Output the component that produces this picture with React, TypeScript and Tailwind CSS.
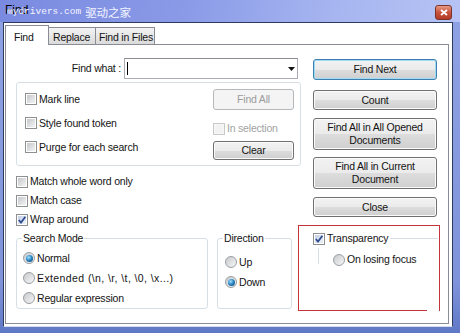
import React from "react";

function CheckBox({ checked = false, disabled = false }: { checked?: boolean; disabled?: boolean }) {
  return (
    <span
      className={
        disabled
          ? "relative flex h-[12px] w-[12px] shrink-0 items-center justify-center border border-[#c8c8c8] bg-[#f7f7f7]"
          : "relative flex h-[12px] w-[12px] shrink-0 items-center justify-center border border-[#8e8f8f] bg-white"
      }
    >
      <span
        className={
          disabled
            ? "h-[8px] w-[8px] bg-[#f2f2f2]"
            : checked
            ? "h-[8px] w-[8px] bg-[linear-gradient(135deg,#c3cde6,#eef2fa)]"
            : "h-[8px] w-[8px] bg-[linear-gradient(135deg,#c4c7cb,#f4f4f4)]"
        }
      />
      {checked && (
        <svg className="absolute left-0 top-0" width="10" height="10" viewBox="0 0 10 10">
          <path d="M1.8 5 L4 7.6 L8.4 1.8" fill="none" stroke="#2d4a8c" strokeWidth="1.7" />
        </svg>
      )}
    </span>
  );
}

function Radio({ checked = false }: { checked?: boolean }) {
  return (
    <span className="flex h-[12px] w-[12px] shrink-0 items-center justify-center rounded-full border border-[#9a9ea2] bg-[linear-gradient(135deg,#c6c9cd,#f7f7f7)]">
      {checked && (
        <span className="h-[7px] w-[7px] rounded-full bg-[radial-gradient(circle_at_38%_35%,#a6e2ff_0%,#2c89c6_45%,#0b3966_100%)]" />
      )}
    </span>
  );
}

function Btn({
  children,
  className = "",
  focused = false,
  disabled = false,
}: {
  children: React.ReactNode;
  className?: string;
  focused?: boolean;
  disabled?: boolean;
}) {
  const base = "flex items-center justify-center rounded-[3px] border text-center leading-[13px] ";
  const look = disabled
    ? "border-[#b5b9bc] bg-[#f4f4f4] text-[#9c9c9c]"
    : focused
    ? "border-[#3c7fb1] bg-[linear-gradient(to_bottom,#f2f2f2_0%,#ebebeb_50%,#dddddd_51%,#cfcfcf_100%)] shadow-[inset_0_0_0_1px_#9fdcf4]"
    : "border-[#707070] bg-[linear-gradient(to_bottom,#f2f2f2_0%,#ebebeb_50%,#dddddd_51%,#cfcfcf_100%)] shadow-[inset_0_0_0_1px_#fbfbfb]";
  return <div className={base + look + " " + className}>{children}</div>;
}

function CheckRow({ label, checked = false, className = "" }: { label: string; checked?: boolean; className?: string }) {
  return (
    <div className={"flex items-center gap-[2px] " + className}>
      <CheckBox checked={checked} />
      <span>{label}</span>
    </div>
  );
}

function RadioRow({
  label,
  checked = false,
  className = "",
  labelClass = "",
}: {
  label: string;
  checked?: boolean;
  className?: string;
  labelClass?: string;
}) {
  return (
    <div className={"flex items-center gap-[2px] " + className}>
      <Radio checked={checked} />
      <span className={labelClass}>{label}</span>
    </div>
  );
}

export default function App() {
  return (
    <div className="flex h-[333px] w-[460px] flex-col overflow-hidden bg-[linear-gradient(to_bottom,#8fa2e4,#7f93da_85%,#5f78c6)] font-['Liberation_Sans',Arial,sans-serif] text-[10.5px] leading-[13px] tracking-[-0.2px] text-[#141414]">
      {/* title bar */}
      <div className="relative flex h-[22px] shrink-0 items-start bg-[linear-gradient(100deg,#7a8ae0_0%,#8a9ae7_40%,#a6b5f0_72%,#b6c3f4_100%)]">
        <span className="pl-[5px] pt-[3px] text-[12px] leading-[14px] tracking-normal text-black">Find</span>
        <div className="absolute left-[7px] top-[6px] flex items-center gap-[4px] text-[#f4f6ff]">
          <span className="font-['Liberation_Mono',monospace] text-[9.5px] leading-[12px] tracking-normal">mydrivers.com</span>
          <span className="font-['Noto_Sans_CJK_SC',sans-serif] text-[11.5px] leading-[12px] tracking-normal">驱动之家</span>
        </div>
        <div className="ml-auto mr-[8px] mt-[5px] flex h-[15px] w-[17px] items-center justify-center rounded-[3px] border border-[#7a3326] bg-[linear-gradient(to_bottom,#e79a86,#c8533c_50%,#b43b26)]">
          <svg width="8" height="7" viewBox="0 0 8 7">
            <path d="M1 1 L7 6 M7 1 L1 6" stroke="white" strokeWidth="1.8" />
          </svg>
        </div>
      </div>

      {/* client area */}
      <div className="ml-[3px] mr-[7px] flex h-[305px] flex-col border-x border-t border-b border-x-[#2f3b5c] border-t-[#2f3b5c] border-b-[#d6dcec] bg-white pb-[2px] pl-[1px] pr-[3px]">
        {/* tabs */}
        <div className="mt-[2px] flex h-[19px] shrink-0 items-end">
          <div className="relative z-10 -mb-px flex h-[20px] w-[44px] items-start border border-b-0 border-[#898c95] bg-white pl-[8px] pt-[5px]">
            Find
          </div>
          <div className="flex h-[17px] w-[47px] items-start border-r border-t border-[#898c95] bg-[linear-gradient(to_bottom,#f3f3f3,#dadada)] pl-[4px] pt-[3px]">
            Replace
          </div>
          <div className="flex h-[17px] w-[59px] items-start border-r border-t border-[#898c95] bg-[linear-gradient(to_bottom,#f3f3f3,#dadada)] pl-[3px] pt-[3px]">
            Find in Files
          </div>
        </div>

        {/* panel */}
        <div className="flex flex-1 flex-col border border-[#898c95] bg-white">
          <div className="flex pl-[9px]">
            {/* left column */}
            <div className="flex w-[286px] flex-col">
              <div className="mt-[13px] flex h-[21px] items-center">
                <span className="w-[106px] text-right">Find what :</span>
                <div className="ml-[3px] flex h-[21px] w-[174px] items-center border border-[#abadb3] border-t-[#8a8d94] bg-white pl-[2px] pr-[2px]">
                  <span className="h-[13px] w-px bg-black" />
                  <svg className="ml-auto" width="7" height="4" viewBox="0 0 7 4">
                    <path d="M0 0 H7 L3.5 4 Z" fill="#111" />
                  </svg>
                </div>
              </div>

              <div className="ml-[1px] mt-[3px] flex h-[84px] w-[285px] rounded-[3px] border border-[#d5dfe5]">
                <div className="flex flex-col pl-[8px] pt-[4px]">
                  <CheckRow label="Mark line" className="h-[24px]" />
                  <CheckRow label="Style found token" className="h-[24px]" />
                  <CheckRow label="Purge for each search" className="h-[24px]" />
                </div>
                <div className="ml-auto mr-[6px] flex w-[81px] flex-col pt-[6px]">
                  <Btn disabled className="h-[21px]">
                    Find All
                  </Btn>
                  <div className="mt-[12px] flex h-[13px] items-center gap-[2px] text-[#a2a2a2]">
                    <CheckBox disabled />
                    <span>In selection</span>
                  </div>
                  <Btn className="mt-[6px] h-[19px]">Clear</Btn>
                </div>
              </div>

              <div className="ml-[1px] mt-[6px] flex flex-col">
                <CheckRow label="Match whole word only" className="h-[19px]" />
                <CheckRow label="Match case" className="h-[19px]" />
                <CheckRow label="Wrap around" checked className="h-[19px]" />
              </div>
            </div>

            {/* right column */}
            <div className="ml-[12px] flex w-[124px] flex-col">
              <Btn focused className="mt-[14px] h-[21px]">
                Find Next
              </Btn>
              <Btn className="mt-[10px] h-[20px]">Count</Btn>
              <Btn className="mt-[8px] h-[32px]">
                Find All in All Opened
                <br />
                Documents
              </Btn>
              <Btn className="mt-[7px] h-[32px]">
                Find All in Current
                <br />
                Document
              </Btn>
              <Btn className="mt-[8px] h-[20px]">Close</Btn>
            </div>
          </div>

          {/* bottom groups */}
          <div className="-mt-[4px] flex items-start pl-[10px]">
            <fieldset className="mt-[7px] h-[77px] w-[192px] rounded-[3px] border border-[#d5dfe5]">
              <legend className="ml-[5px] px-[1px] leading-[13px]">Search Mode</legend>
              <div className="flex flex-col pl-[6px] pt-[3px]">
                <RadioRow label="Normal" checked className="h-[20px]" />
                <RadioRow
                  label="Extended (\n, \r, \t, \0, \x...)"
                  labelClass="tracking-[0.4px]"
                  className="h-[20px]"
                />
                <RadioRow label="Regular expression" className="h-[20px]" />
              </div>
            </fieldset>

            <fieldset className="ml-[9px] mt-[7px] h-[77px] w-[75px] rounded-[3px] border border-[#d5dfe5]">
              <legend className="ml-[5px] px-[1px] leading-[13px]">Direction</legend>
              <div className="flex flex-col pl-[7px] pt-[7px]">
                <RadioRow label="Up" className="h-[20px]" />
                <RadioRow label="Down" checked className="h-[20px]" />
              </div>
            </fieldset>

            <div className="ml-[6px] flex h-[86px] w-[142px] flex-col border-x border-t border-[#c4343c]">
              <div className="mt-[6px] flex h-[13px] items-center pl-[14px]">
                <CheckBox checked />
                <span className="ml-[2px]">Transparency</span>
                <span className="ml-[2px] mr-[1px] h-px flex-1 bg-[#d5dfe5]" />
              </div>
              <div className="ml-[19px] mt-[3px] h-[16px] border-l border-[#d5dfe5] pl-[14px] pt-[5px]">
                <RadioRow label="On losing focus" className="h-[13px]" />
              </div>
              <div className="mt-auto h-px w-[128px] bg-[#c4343c]" />
            </div>
          </div>
        </div>
      </div>
    </div>
  );
}
